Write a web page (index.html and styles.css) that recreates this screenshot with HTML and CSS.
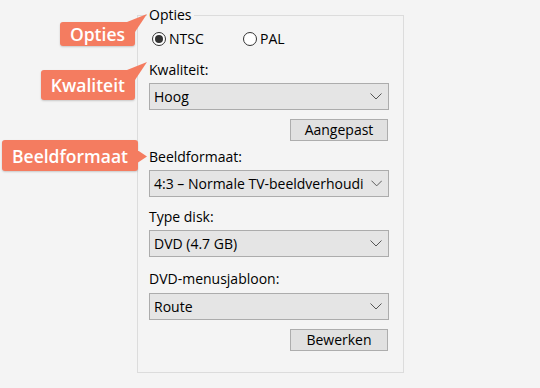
FILE: index.html
```html
<!DOCTYPE html>
<html lang="nl">
<head>
    <meta charset="UTF-8">
    <title>Opties</title>
    <link rel="stylesheet" href="styles.css">
</head>
<body>

    <div class="stage">
        <fieldset class="options">
            <legend>Opties</legend>

            <div class="radios">
                <label class="radio"><span class="dot checked"></span>NTSC</label>
                <label class="radio"><span class="dot"></span>PAL</label>
            </div>

            <div class="label first">Kwaliteit:</div>
            <div class="select">
                <span class="value">Hoog</span>
                <svg class="chevron" width="12" height="7" viewBox="0 0 12 7"><path d="M0.5 0.5 L6 6 L11.5 0.5" fill="none" stroke="#555" stroke-width="1"/></svg>
            </div>
            <div class="actions"><button>Aangepast</button></div>

            <div class="label after-button">Beeldformaat:</div>
            <div class="select">
                <span class="value">4:3 – Normale TV-beeldverhoudi</span>
                <svg class="chevron" width="12" height="7" viewBox="0 0 12 7"><path d="M0.5 0.5 L6 6 L11.5 0.5" fill="none" stroke="#555" stroke-width="1"/></svg>
            </div>

            <div class="label">Type disk:</div>
            <div class="select">
                <span class="value">DVD (4.7 GB)</span>
                <svg class="chevron" width="12" height="7" viewBox="0 0 12 7"><path d="M0.5 0.5 L6 6 L11.5 0.5" fill="none" stroke="#555" stroke-width="1"/></svg>
            </div>

            <div class="label wide">DVD-menusjabloon:</div>
            <div class="select">
                <span class="value">Route</span>
                <svg class="chevron" width="12" height="7" viewBox="0 0 12 7"><path d="M0.5 0.5 L6 6 L11.5 0.5" fill="none" stroke="#555" stroke-width="1"/></svg>
            </div>
            <div class="actions"><button>Bewerken</button></div>
        </fieldset>

        <!-- annotation callouts -->
        <div class="callout up c-opties">Opties</div>
        <div class="callout up c-kwaliteit">Kwaliteit</div>
        <div class="callout side c-beeld">Beeldformaat</div>
    </div>

</body>
</html>
```

FILE: styles.css
```css
/* General Styles */
body {
    margin: 0;
    background: #f4f4f4;
    font-family: 'Open Sans', 'Noto Sans', sans-serif;
    font-size: 14px;
    color: #000;
}

.stage {
    position: relative;
    width: 540px;
    height: 388px;
    padding-top: 6px;
    box-sizing: border-box;
}

.options {
    box-sizing: border-box;
    width: 267px;
    margin: 0 0 0 137px;
    padding: 0 14px 21px 11px;
    border: 1px solid #dcdcdc;
}

.options legend {
    padding: 0 2px;
    margin-left: -2px;
    line-height: 18px;
}

.radios {
    display: flex;
    margin-top: 6px;
    height: 18px;
    line-height: 18px;
}

.radio {
    display: flex;
    align-items: center;
    gap: 3px;
    width: 91px;
}

.dot {
    box-sizing: border-box;
    width: 14px;
    height: 14px;
    margin-left: 3px;
    border: 1px solid #333;
    border-radius: 50%;
    background: #fff;
    display: flex;
    align-items: center;
    justify-content: center;
}

.dot.checked::after {
    content: "";
    width: 8px;
    height: 8px;
    border-radius: 50%;
    background: #333;
}

.label {
    line-height: 18px;
    margin-top: 11px;
    margin-bottom: 4px;
}

.label.first {
    margin-top: 13px;
}

.label.after-button {
    margin-top: 7px;
}

.label.wide {
    margin-top: 13px;
    margin-bottom: 5px;
}

.select {
    box-sizing: border-box;
    width: 240px;
    height: 27px;
    display: flex;
    align-items: center;
    padding: 0 6px 0 4px;
    background: #e5e5e5;
    border: 1px solid #acacac;
}

.select .value {
    flex: 1;
    white-space: nowrap;
    margin-right: 7px;
}

.actions {
    display: flex;
    justify-content: flex-end;
    width: 239px;
    margin-top: 9px;
}

button {
    box-sizing: border-box;
    width: 98px;
    height: 22px;
    padding: 0;
    font-family: inherit;
    font-size: 14px;
    line-height: 18px;
    color: #000;
    background: #e1e1e1;
    border: 1px solid #adadad;
    border-radius: 0;
}

/* annotation callouts */
.callout {
    position: absolute;
    box-sizing: border-box;
    padding: 0 10px;
    background: #f47c60;
    color: #fff;
    font-weight: 600;
    font-size: 17.5px;
    border-radius: 3px;
    box-shadow: 0 1px 2px rgba(0, 0, 0, 0.18);
    display: flex;
    align-items: center;
}

.callout::after {
    content: "";
    position: absolute;
    background: #f47c60;
}

.callout.up::after {
    left: calc(100% - 8px);
    top: -8px;
    width: 20px;
    height: 20px;
    clip-path: polygon(0 8px, 20px 0, 8px 18px);
}

.callout.side::after {
    left: 100%;
    top: 50%;
    width: 9px;
    height: 12px;
    margin-top: -5px;
    clip-path: polygon(0 0, 9px 6px, 0 12px);
}

.c-opties {
    right: 405px;
    top: 22px;
    height: 24px;
}

.c-kwaliteit {
    right: 405px;
    top: 70px;
    height: 30px;
}

.c-beeld {
    right: 402px;
    top: 140px;
    height: 31px;
}
```
